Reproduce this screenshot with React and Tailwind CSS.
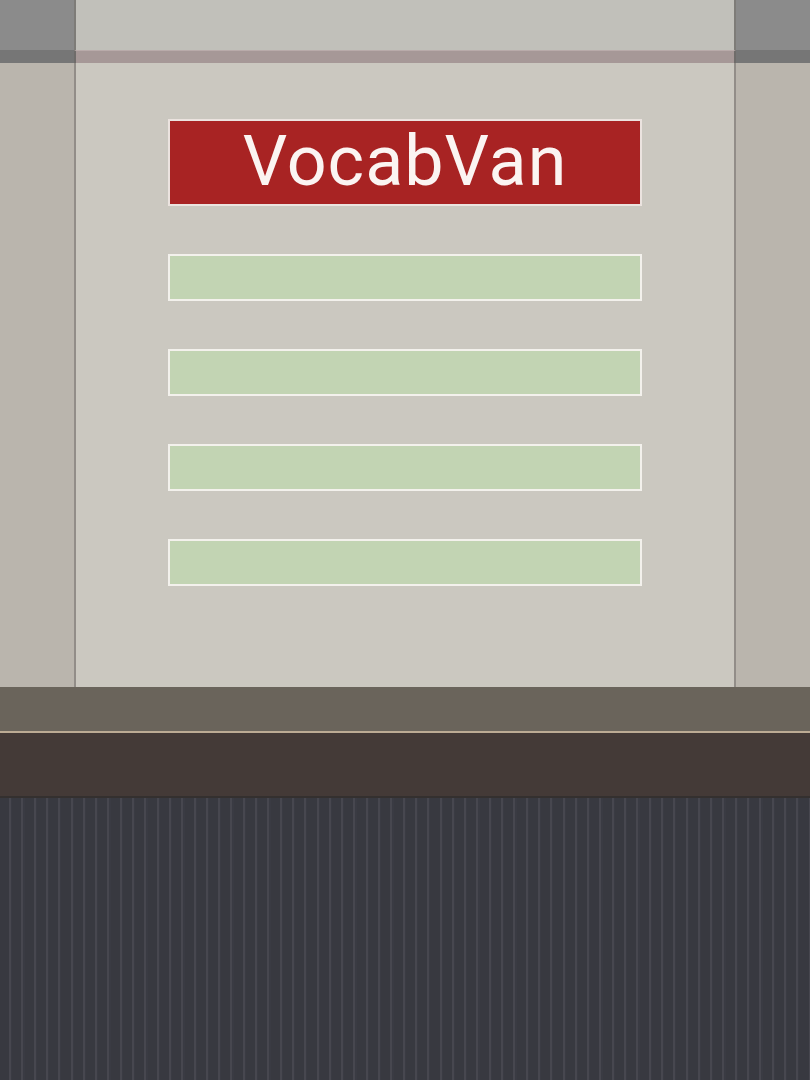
export default function App() {
  const slots = [0, 1, 2, 3]

  return (
    <div className="flex h-[1080px] w-[810px] flex-col overflow-hidden bg-[#383940]">
      {/* top caps */}
      <div className="flex h-[50px]">
        <div className="w-[74px] bg-[#8b8b8b]" />
        <div className="flex-1 border-x-2 border-[#7e7c78] bg-[#c1c0ba]" />
        <div className="w-[74px] bg-[#8b8b8b]" />
      </div>
      <div className="flex h-[13px]">
        <div className="w-[74px] bg-[#767676]" />
        <div className="flex-1 border-x-2 border-[#6f6c6a] border-t border-t-[#b9abaa] bg-[#a69897]" />
        <div className="w-[74px] bg-[#767676]" />
      </div>

      {/* board */}
      <div className="flex h-[624px]">
        <div className="w-[74px] bg-[#bab5ad]" />
        <div className="flex flex-1 flex-col items-center border-x-2 border-[#928d88] bg-[#cbc8c0] pt-[56px]">
          <div className="flex h-[87px] w-[474px] items-center justify-center border-2 border-[#ebe3df] bg-[#a82323] pb-[4px]">
            <span className="font-['Roboto',sans-serif] text-[70px] font-normal leading-none tracking-[1px] text-[#fbf4f2]">
              VocabVan
            </span>
          </div>
          <div className="mt-[48px] flex flex-col gap-[48px]">
            {slots.map((i) => (
              <div key={i} className="h-[47px] w-[474px] border-2 border-[#f3f1ec] bg-[#c2d4b3]" />
            ))}
          </div>
        </div>
        <div className="w-[74px] bg-[#bab5ad]" />
      </div>

      {/* counter */}
      <div className="h-[44px] bg-[#6a645b]" />
      <div className="h-[2px] bg-[#bcab94]" />
      <div className="h-[63px] bg-[#443a37]" />
      <div className="h-[2px] bg-[#34302f]" />
      <div className="flex-1 bg-[repeating-linear-gradient(90deg,#383940_0px,#383940_9px,#47474f_9px,#47474f_11px,#3a3b43_11px,#3a3b43_12.3px)]" />
    </div>
  )
}
